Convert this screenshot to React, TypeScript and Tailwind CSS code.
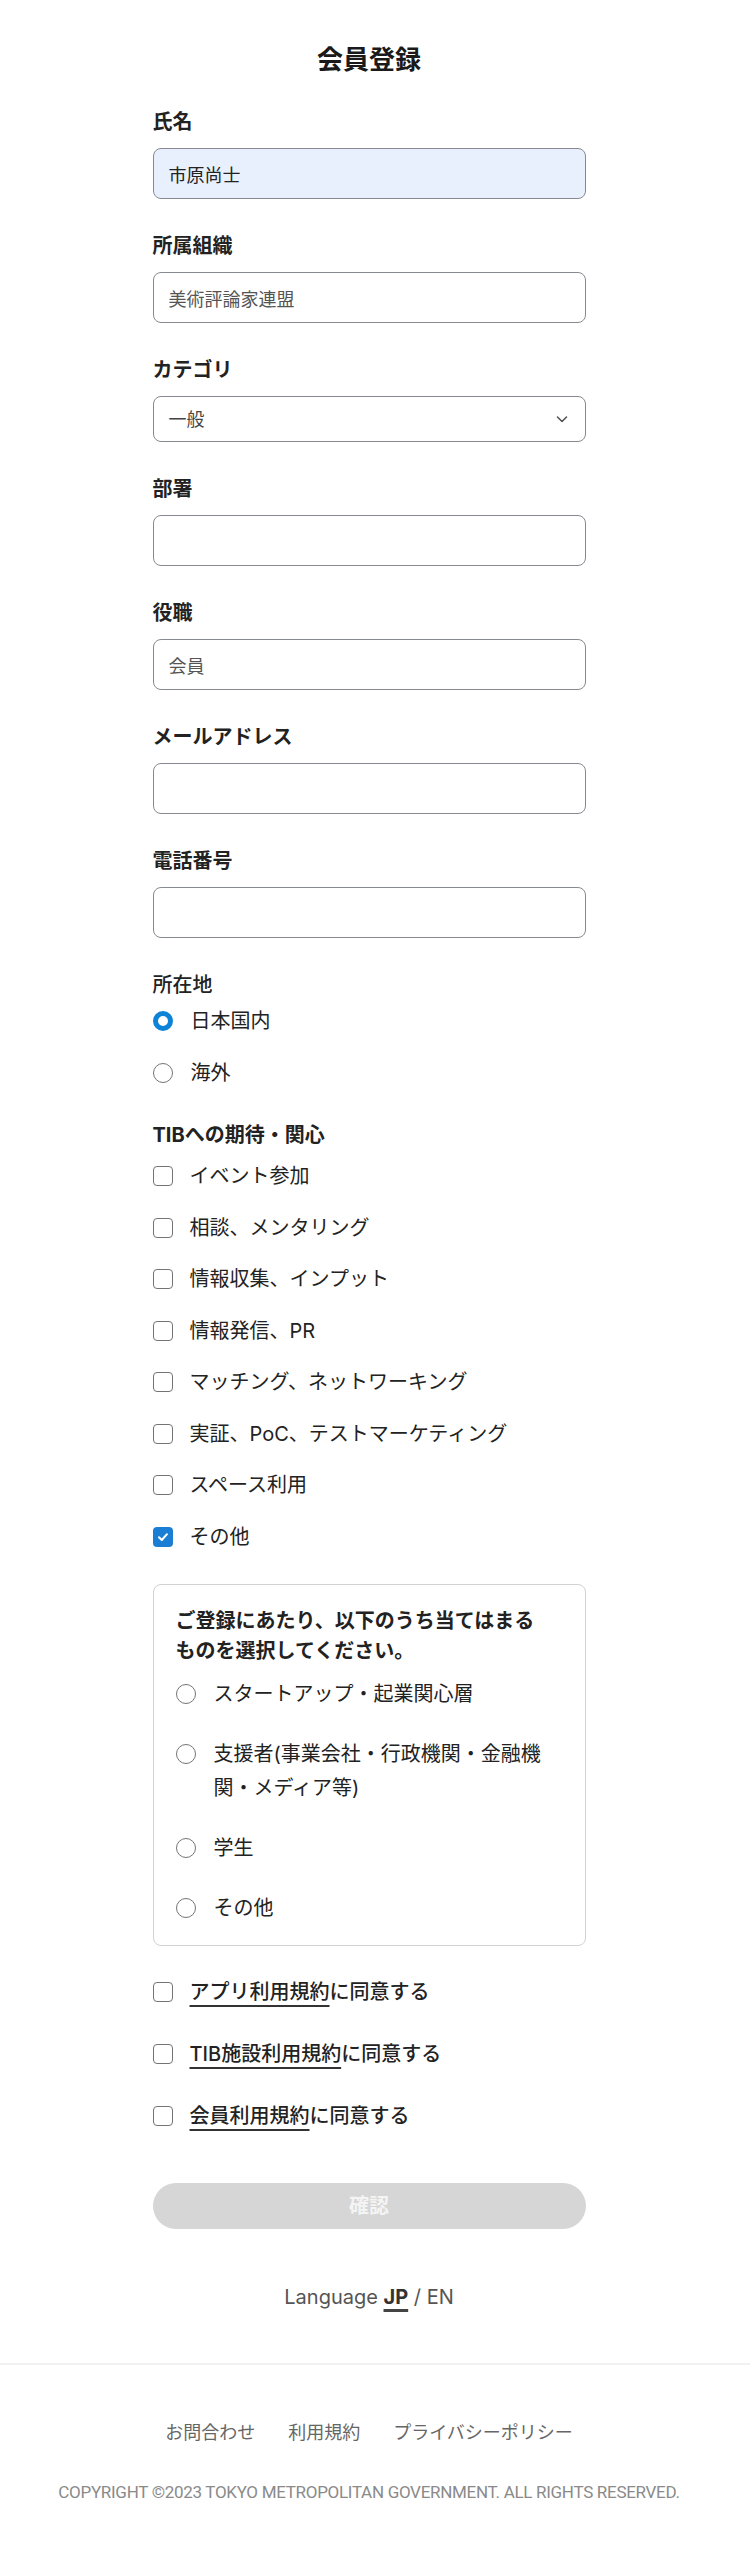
import React from "react";

const FONT = 'Inter, "Noto Sans CJK JP", sans-serif';

function Label({ children, weight = "font-bold" }: { children: React.ReactNode; weight?: string }) {
  return <div className={`text-[20px] leading-[28px] ${weight} text-[#222]`}>{children}</div>;
}

function TextInput({ value, filled, tone }: { value?: string; filled?: boolean; tone?: string }) {
  return (
    <input
      readOnly
      defaultValue={value ?? ""}
      className={`mt-[12px] block w-full h-[51px] rounded-[8px] border-[1.5px] border-[#868a90] px-[15px] text-[18px] outline-none ${
        filled ? "bg-[#e8f0fe] text-[#222]" : "bg-white " + (tone ?? "text-[#555]")
      }`}
      style={{ fontFamily: FONT }}
    />
  );
}

function Field({ label, value, filled }: { label: string; value?: string; filled?: boolean }) {
  return (
    <div className="flex flex-col">
      <Label>{label}</Label>
      <TextInput value={value} filled={filled} />
    </div>
  );
}

function Radio({ checked }: { checked?: boolean }) {
  return checked ? (
    <span className="block w-[20px] h-[20px] shrink-0 rounded-full border-[5.5px] border-[#0c83d6] bg-white" />
  ) : (
    <span className="block w-[20px] h-[20px] shrink-0 rounded-full border-[1.5px] border-[#747474] bg-white" />
  );
}

function Checkbox({ checked }: { checked?: boolean }) {
  return checked ? (
    <span className="flex items-center justify-center w-[20px] h-[20px] shrink-0 rounded-[4px] bg-[#1a7fd4]">
      <svg width="14" height="14" viewBox="0 0 14 14" fill="none">
        <path d="M3 7.2 L5.8 10 L11 4.2" stroke="white" strokeWidth="2" strokeLinecap="round" strokeLinejoin="round" />
      </svg>
    </span>
  ) : (
    <span className="block w-[20px] h-[20px] shrink-0 rounded-[4px] border-[1.5px] border-[#747474] bg-white" />
  );
}

const interests = [
  "イベント参加",
  "相談、メンタリング",
  "情報収集、インプット",
  "情報発信、PR",
  "マッチング、ネットワーキング",
  "実証、PoC、テストマーケティング",
  "スペース利用",
  "その他",
];

export default function App() {
  return (
    <div className="w-full bg-white text-[#222]" style={{ fontFamily: FONT }}>
      <div className="w-[738px] flex flex-col items-center">
        <main className="w-[433px] pt-[42px]">
          <h1 className="text-center text-[26px] leading-[36px] font-bold text-[#1a1a1a] mb-[30px]">会員登録</h1>

          <div className="flex flex-col gap-[33px]">
            <Field label="氏名" value="市原尚士" filled />
            <Field label="所属組織" value="美術評論家連盟" />

            <div className="flex flex-col">
              <Label>カテゴリ</Label>
              <div className="mt-[12px] flex items-center justify-between w-full h-[46px] rounded-[8px] border-[1.5px] border-[#868a90] pl-[15px] pr-[16px] bg-white">
                <span className="text-[18px] text-[#444]">一般</span>
                <svg width="14" height="14" viewBox="0 0 14 14" fill="none">
                  <path d="M2.5 5 L7 9.5 L11.5 5" stroke="#555" strokeWidth="1.6" strokeLinecap="round" strokeLinejoin="round" />
                </svg>
              </div>
            </div>

            <Field label="部署" />
            <Field label="役職" value="会員" />
            <Field label="メールアドレス" />
            <Field label="電話番号" />

            <div className="flex flex-col">
              <Label weight="font-medium">所在地</Label>
              <div className="mt-[7px] flex flex-col gap-[22px]">
                <div className="flex items-center gap-[18px] h-[30px]">
                  <Radio checked />
                  <span className="text-[20px] leading-[30px] text-[#222]">日本国内</span>
                </div>
                <div className="flex items-center gap-[18px] h-[30px]">
                  <Radio />
                  <span className="text-[20px] leading-[30px] text-[#222]">海外</span>
                </div>
              </div>
            </div>

            <div className="flex flex-col">
              <Label>TIBへの期待・関心</Label>
              <div className="mt-[12px] flex flex-col gap-[21.5px]">
                {interests.map((t, i) => (
                  <div key={t} className="flex items-center gap-[17px] h-[30px]">
                    <Checkbox checked={i === interests.length - 1} />
                    <span className="text-[20px] leading-[30px] text-[#222]">{t}</span>
                  </div>
                ))}
              </div>
            </div>
          </div>

          <div className="mt-[32px] rounded-[8px] border border-[#d2d2d2] pt-[21px] pb-[20px] pl-[22px] pr-[32px]">
            <p className="text-[20px] leading-[30px] font-bold text-[#222]">
              ご登録にあたり、以下のうち当てはまるものを選択してください。
            </p>
            <div className="mt-[11px] flex flex-col gap-[26px]">
              {["スタートアップ・起業関心層", "支援者(事業会社・行政機関・金融機関・メディア等)", "学生", "その他"].map((t) => (
                <div key={t} className="flex items-start gap-[18px]">
                  <span className="mt-[7px]">
                    <Radio />
                  </span>
                  <span className="text-[20px] leading-[34px] text-[#222]">{t}</span>
                </div>
              ))}
            </div>
          </div>

          <div className="mt-[31.5px] flex flex-col gap-[32px]">
            {[
              ["アプリ利用規約", "に同意する"],
              ["TIB施設利用規約", "に同意する"],
              ["会員利用規約", "に同意する"],
            ].map(([a, b]) => (
              <div key={a} className="flex items-center gap-[17px] h-[30px]">
                <Checkbox />
                <span className="text-[20px] leading-[30px] font-medium text-[#222]">
                  <span className="underline underline-offset-[6px] decoration-[1.5px] decoration-[#333]">{a}</span>
                  {b}
                </span>
              </div>
            ))}
          </div>

          <button className="mt-[52px] w-full h-[46px] rounded-full bg-[#d6d6d6] text-[20px] font-bold text-[#f4f4f4]">
            確認
          </button>
        </main>

        <div className="mt-[54px] text-[20px] leading-[28px] text-[#555]">
          Language{" "}
          <span className="font-bold text-[#333] underline decoration-[3px] underline-offset-[5px] decoration-[#444]">JP</span>{" "}
          / EN
        </div>
      </div>

      <div className="mt-[52px] h-[2px] w-full bg-[#f1f1f1]" />

      <div className="w-[738px] flex flex-col items-center pb-[56px]">
        <div className="mt-[55px] flex gap-[33px] text-[18px] leading-[26px] text-[#666]">
          <span>お問合わせ</span>
          <span>利用規約</span>
          <span>プライバシーポリシー</span>
        </div>
        <div
          className="mt-[34px] text-[17px] leading-[24px] text-[#8a8a8a] tracking-[-0.3px] whitespace-nowrap"
          style={{ fontFamily: 'Roboto, "Liberation Sans", sans-serif' }}
        >
          COPYRIGHT ©2023 TOKYO METROPOLITAN GOVERNMENT. ALL RIGHTS RESERVED.
        </div>
      </div>
    </div>
  );
}
